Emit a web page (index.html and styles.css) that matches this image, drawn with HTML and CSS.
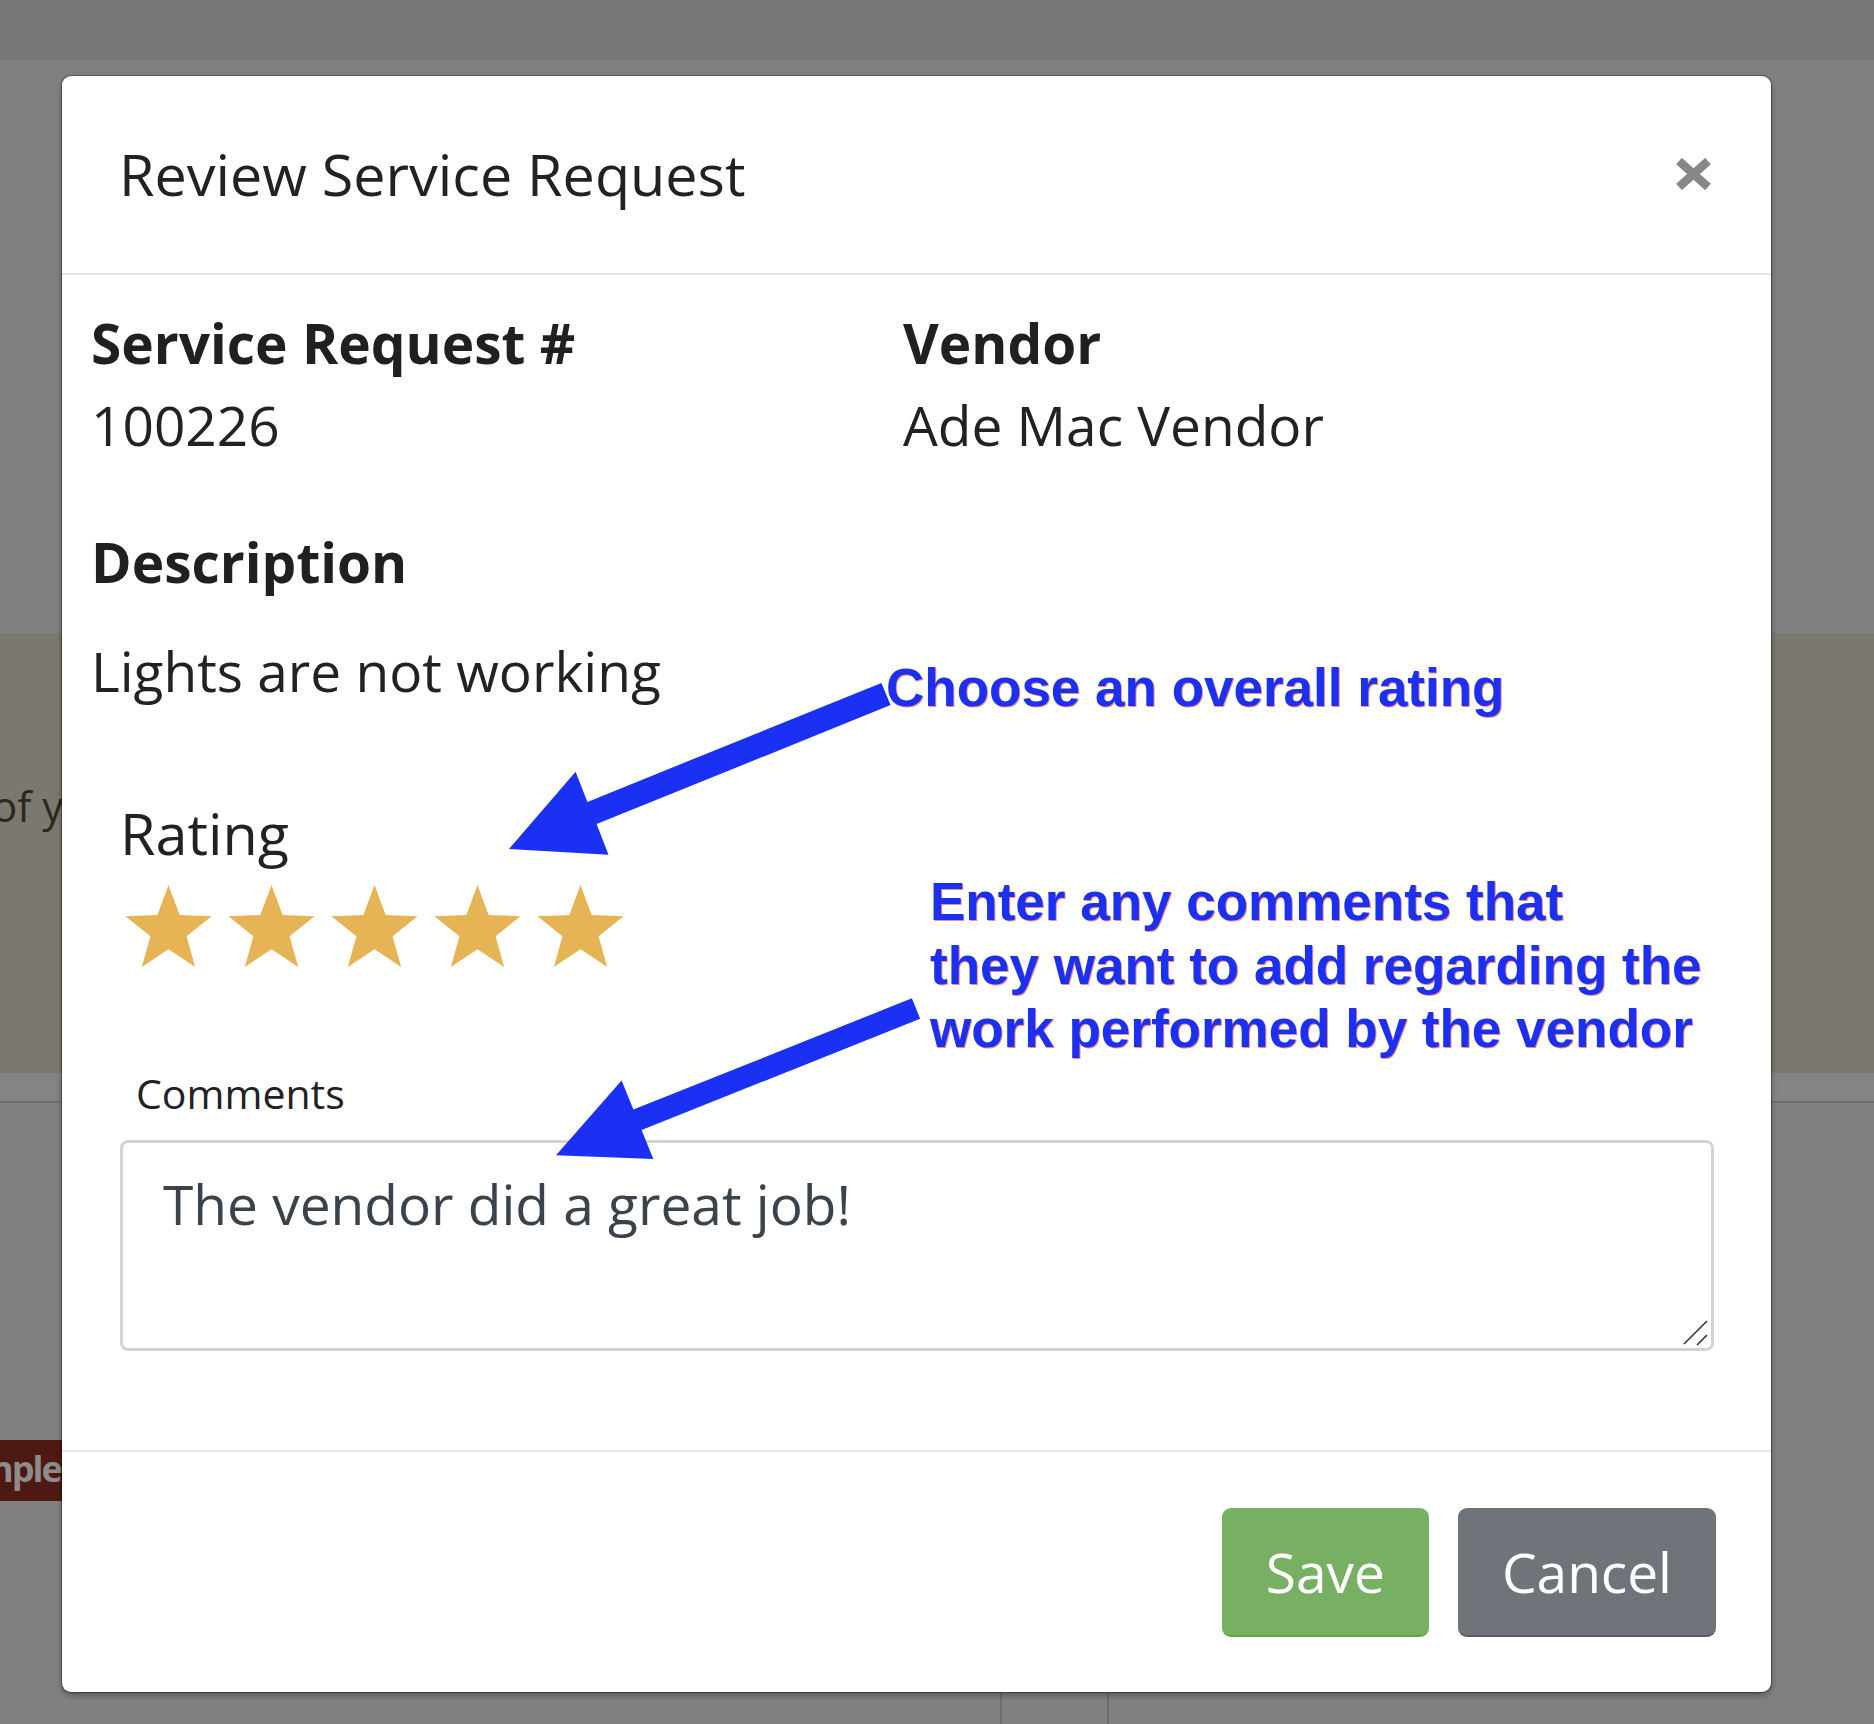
FILE: index.html
```html
<!DOCTYPE html>
<html lang="en">
<head>
    <meta charset="UTF-8">
    <title>Review Service Request</title>
    <link rel="stylesheet" href="styles.css">
</head>
<body>

    <div class="page">
        <div class="topbar"></div>
        <div class="band"><span class="band-text">of y</span></div>
        <div class="band-foot"></div>
        <div class="badge-row"><span class="badge">nple</span></div>
        <div class="table-row">
            <span class="cell cell-a"></span>
            <span class="cell cell-b"></span>
        </div>
    </div>

    <div class="modal">
        <div class="modal-header">
            <h4 class="modal-title">Review Service Request</h4>
            <button class="close" aria-label="Close">
                <svg width="35" height="32" viewBox="0 0 35 32">
                    <path d="M3 3 L32 29 M32 3 L3 29" stroke="#878787" stroke-width="8.5" fill="none"/>
                </svg>
            </button>
        </div>

        <div class="modal-body">
            <div class="details">
                <div>
                    <div class="label">Service Request #</div>
                    <div class="value">100226</div>
                </div>
                <div>
                    <div class="label">Vendor</div>
                    <div class="value">Ade Mac Vendor</div>
                </div>
            </div>
            <div class="desc">
                <div class="label">Description</div>
                <div class="value">Lights are not working</div>
            </div>

            <div class="rating">
                <div class="rating-label">Rating</div>
                <div class="stars">
                    <svg class="star" viewBox="2.45 0 95.1 90.45"><polygon points="50,0 62.34,33.01 97.55,34.55 69.97,56.49 79.39,90.45 50,71 20.61,90.45 30.03,56.49 2.45,34.55 37.66,33.01"/></svg>
                    <svg class="star" viewBox="2.45 0 95.1 90.45"><polygon points="50,0 62.34,33.01 97.55,34.55 69.97,56.49 79.39,90.45 50,71 20.61,90.45 30.03,56.49 2.45,34.55 37.66,33.01"/></svg>
                    <svg class="star" viewBox="2.45 0 95.1 90.45"><polygon points="50,0 62.34,33.01 97.55,34.55 69.97,56.49 79.39,90.45 50,71 20.61,90.45 30.03,56.49 2.45,34.55 37.66,33.01"/></svg>
                    <svg class="star" viewBox="2.45 0 95.1 90.45"><polygon points="50,0 62.34,33.01 97.55,34.55 69.97,56.49 79.39,90.45 50,71 20.61,90.45 30.03,56.49 2.45,34.55 37.66,33.01"/></svg>
                    <svg class="star" viewBox="2.45 0 95.1 90.45"><polygon points="50,0 62.34,33.01 97.55,34.55 69.97,56.49 79.39,90.45 50,71 20.61,90.45 30.03,56.49 2.45,34.55 37.66,33.01"/></svg>
                </div>

                <label class="comments-label" for="comments">Comments</label>
                <div class="comments-wrap">
                    <textarea id="comments" class="comments">The vendor did a great job!</textarea>
                    <svg class="grip" width="26" height="26" viewBox="0 0 26 26">
                        <path d="M25 1 L2 24 M25 15 L15 25" stroke="#333" stroke-width="1.6" fill="none"/>
                    </svg>
                </div>
            </div>
        </div>

        <div class="modal-footer">
            <button class="btn btn-save">Save</button>
            <button class="btn btn-cancel">Cancel</button>
        </div>
    </div>

    <!-- annotations drawn over the screenshot -->
    <svg class="arrows" width="1874" height="1724" viewBox="0 0 1874 1724">
        <polygon points="881.4,682.9 890.6,705.1 596.6,824.1 608.5,854.7 509,849 575.6,771.7 587.4,801.9"/>
        <polygon points="911.9,998.3 920.1,1018.7 641.6,1130 653.3,1159 556,1155.2 621.6,1080.5 633.4,1109.6"/>
    </svg>
    <div class="note note-rating">Choose an overall rating</div>
    <div class="note note-comments">Enter any comments that<br>they want to add regarding the<br>work performed by the vendor</div>

</body>
</html>
```

FILE: styles.css
```css
body {
    margin: 0;
    width: 1874px;
    height: 1724px;
    overflow: hidden;
    position: relative;
    background-color: #808080;
    font-family: "Open Sans", sans-serif;
}

/* page behind the dialog */
.topbar {
    height: 60px;
    background-color: #77787a;
}
.band {
    margin-top: 573px;
    height: 440px;
    background-color: #7b7870;
    padding-top: 145px;
    box-sizing: border-box;
}
.band-text {
    display: block;
    margin-left: -8px;
    font-size: 42px;
    line-height: 56px;
    color: #2d281f;
}
.band-foot {
    height: 28px;
    background-color: #848484;
    border-bottom: 2px solid #6f6f6f;
}
.badge-row {
    margin-top: 337px;
}
.badge {
    display: block;
    width: 62px;
    height: 61px;
    overflow: hidden;
    background-color: #4e1912;
    color: #8c8c8c;
    font-weight: bold;
    font-size: 36px;
    line-height: 58px;
    text-indent: -10px;
    letter-spacing: -2px;
    white-space: nowrap;
}
.table-row {
    margin-top: 97px;
    height: 130px;
    display: flex;
}
.cell {
    display: block;
    height: 100%;
}
.cell-a {
    margin-left: 1000px;
    width: 105px;
    border-left: 2px solid #6c6c6c;
    border-right: 2px solid #6c6c6c;
}

/* dialog */
.modal {
    position: absolute;
    left: 62px;
    top: 76px;
    width: 1709px;
    height: 1616px;
    background: white;
    border-radius: 9px;
    box-shadow: 0 0 0 1px rgba(0, 0, 0, 0.3), 0 3px 6px rgba(0, 0, 0, 0.35);
    display: flex;
    flex-direction: column;
}
.modal-header {
    display: flex;
    align-items: center;
    justify-content: space-between;
    padding: 56px 60px 57px 57px;
    border-bottom: 2px solid #e5e5e5;
}
.modal-title {
    margin: 0;
    font-size: 57.5px;
    font-weight: normal;
    line-height: 84px;
    color: #222;
}
.close {
    border: none;
    background: none;
    padding: 0;
    display: flex;
}
.modal-body {
    flex: 1;
    padding: 27px 57px 0 29px;
}
.details {
    display: grid;
    grid-template-columns: 812px 1fr;
}
.label {
    font-size: 55px;
    font-weight: bold;
    line-height: 82px;
    color: #202020;
}
.value {
    font-size: 55px;
    line-height: 82px;
    color: #222;
}
.desc {
    margin-top: 55px;
}
.desc .value {
    margin-top: 27px;
}
.rating {
    padding-left: 29px;
    margin-top: 80px;
}
.rating-label {
    font-size: 57.5px;
    line-height: 82px;
    color: #222;
}
.stars {
    display: flex;
    gap: 16px;
    margin-top: 11px;
    margin-left: 5px;
}
.star {
    width: 87px;
    height: 82px;
    fill: #e6b455;
}
.comments-label {
    display: block;
    margin-top: 96px;
    margin-left: 16px;
    font-size: 41px;
    line-height: 60px;
    color: #222;
}
.comments-wrap {
    position: relative;
    margin-top: 17px;
    width: 1594px;
}
.comments {
    display: block;
    width: 100%;
    height: 211px;
    box-sizing: border-box;
    padding: 20px 40px;
    border: 3px solid #d3d3d3;
    border-radius: 8px;
    font-family: "Open Sans", sans-serif;
    font-size: 55px;
    line-height: 82px;
    color: #3a424b;
    outline: none;
    resize: none;
}
.grip {
    position: absolute;
    right: 6px;
    bottom: 5px;
}
.modal-footer {
    display: flex;
    justify-content: flex-end;
    gap: 29px;
    padding: 56px 55px 55px;
    border-top: 2px solid #e5e5e5;
}
.btn {
    height: 129px;
    padding: 0 44px;
    border: none;
    border-radius: 9px;
    font-family: "Open Sans", sans-serif;
    font-size: 55px;
    color: white;
    cursor: pointer;
}
.btn-save {
    background-color: #78b063;
    border-bottom: 2px solid #5fa545;
}
.btn-cancel {
    background-color: #6f747b;
    border-bottom: 2px solid #555b63;
}

/* blue callouts */
.arrows {
    position: absolute;
    left: 0;
    top: 0;
    fill: #1a30f2;
}
.note {
    position: absolute;
    font-family: "Liberation Sans", Arial, sans-serif;
    font-weight: bold;
    font-size: 53px;
    line-height: 63.5px;
    color: #1b30f2;
    white-space: nowrap;
    text-shadow: 1px 1px 0 rgba(225, 50, 20, 0.55);
}
.note-rating {
    left: 886px;
    top: 656px;
}
.note-comments {
    left: 930px;
    top: 870px;
}
```
